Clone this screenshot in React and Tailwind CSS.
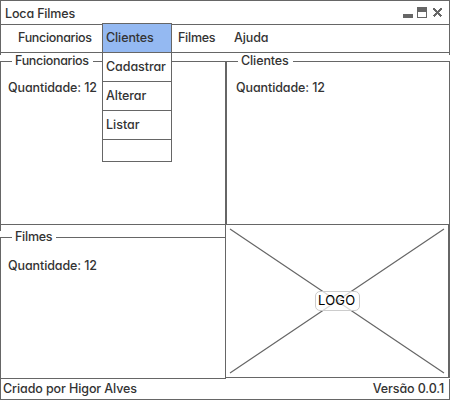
const font = "font-['Inter','Liberation_Sans',sans-serif] [font-feature-settings:'cv11'] font-medium text-[12.5px] leading-4 text-[#333] whitespace-nowrap";

function Panel({ title, tracking, className, legendClass, textClass }) {
  return (
    <section className={`relative border-t border-[#666] ${className}`}>
      <h2 className={`absolute -top-[9px] bg-white pl-[3px] pr-1 ${tracking} ${legendClass}`}>{title}</h2>
      <p className={`tracking-[-0.1px] ${textClass}`}>Quantidade: 12</p>
    </section>
  );
}

function Menu() {
  return (
    <div className="absolute left-[101px] -top-[2px] z-10 w-[70px] border border-[#666] bg-white">
      <div className="h-[29px] border-b border-[#666] bg-[#94b9f2] pl-[3px] pt-[6px] tracking-[-0.1px]">Clientes</div>
      <div className="h-[29px] border-b border-[#666] pl-[3px] pt-[6px] tracking-[-0.07px]">Cadastrar</div>
      <div className="h-[29px] border-b border-[#666] pl-[3px] pt-[6px] tracking-[-0.1px]">Alterar</div>
      <div className="h-[29px] border-b border-[#666] pl-[3px] pt-[6px] tracking-[0px]">Listar</div>
      <div className="h-[21px]" />
    </div>
  );
}

export default function App() {
  return (
    <div className={`flex h-[400px] w-[450px] flex-col overflow-hidden bg-white ${font}`}>
      <header className="flex h-[25px] shrink-0 justify-between border border-[#666] pl-1 pr-[7px] pt-[5px]">
        <h1 className="tracking-[-0.15px]">Loca Filmes</h1>
        <svg width="39" height="12" className="mt-px" shapeRendering="crispEdges">
          <path fill="#666" d="M0 7h10v4H0z M14 0h10v11H14z" />
          <path fill="#fff" d="M15 5h8v5h-8z" />
          <path stroke="#666" strokeWidth="2" d="M30.5 1.5l8 8M38.5 1.5l-8 8" />
        </svg>
      </header>
      <nav className="relative flex h-7 shrink-0 border-x border-b border-[#666] pl-[17px] pt-[5px]">
        <span className="w-[160px] tracking-[-0.32px]">Funcionarios</span>
        <Menu />
        <span className="w-[56px] tracking-[-0.25px]">Filmes</span>
        <span className="tracking-[-0.1px]">Ajuda</span>
      </nav>
      <div className="h-2 shrink-0">
        <div className="h-[2px] border-x border-[#666]" />
      </div>
      <div className="flex h-[164px] shrink-0 border-b border-[#666]">
        <Panel title="Funcionarios" tracking="tracking-[-0.32px]" className="w-[226px] border-x" legendClass="left-[11px]" textClass="pl-[7px] pt-[18px]" />
        <Panel title="Clientes" tracking="tracking-[-0.1px]" className="w-[224px] border-x" legendClass="left-[11px]" textClass="pl-[9px] pt-[18px]" />
      </div>
      <main className="flex h-[154px] shrink-0">
        <div className="flex w-[226px] flex-col border-r border-[#666]">
          <div className="h-3">
            <div className="h-[6px] border-l border-[#666]" />
          </div>
          <Panel title="Filmes" tracking="tracking-[-0.25px]" className="flex-1 border-b border-l" legendClass="left-[11px]" textClass="pl-[7px] pt-[20px]" />
        </div>
        <div className="relative h-[153px] w-[224px] border-b border-r-2 border-[#666]">
          <svg width="222" height="152" stroke="#666" strokeWidth="1.2">
            <path d="M4 4L218 148M4 148L218 4" />
          </svg>
          <div className="absolute left-[89px] top-[66px] h-5 w-[45px] rounded-[5px] border border-[#ccc] bg-white/75 pl-[2px] text-[13px] font-normal tracking-[0.2px] text-black">
            LOGO
          </div>
        </div>
      </main>
      <footer className="flex h-[21px] shrink-0 justify-between border-x border-b border-[#666] pl-[2px] pr-[5px] pt-[2px]">
        <span className="tracking-[-0.1px]">Criado por Higor Alves</span>
        <span className="tracking-[-0.1px]">Versão 0.0.1</span>
      </footer>
    </div>
  );
}
